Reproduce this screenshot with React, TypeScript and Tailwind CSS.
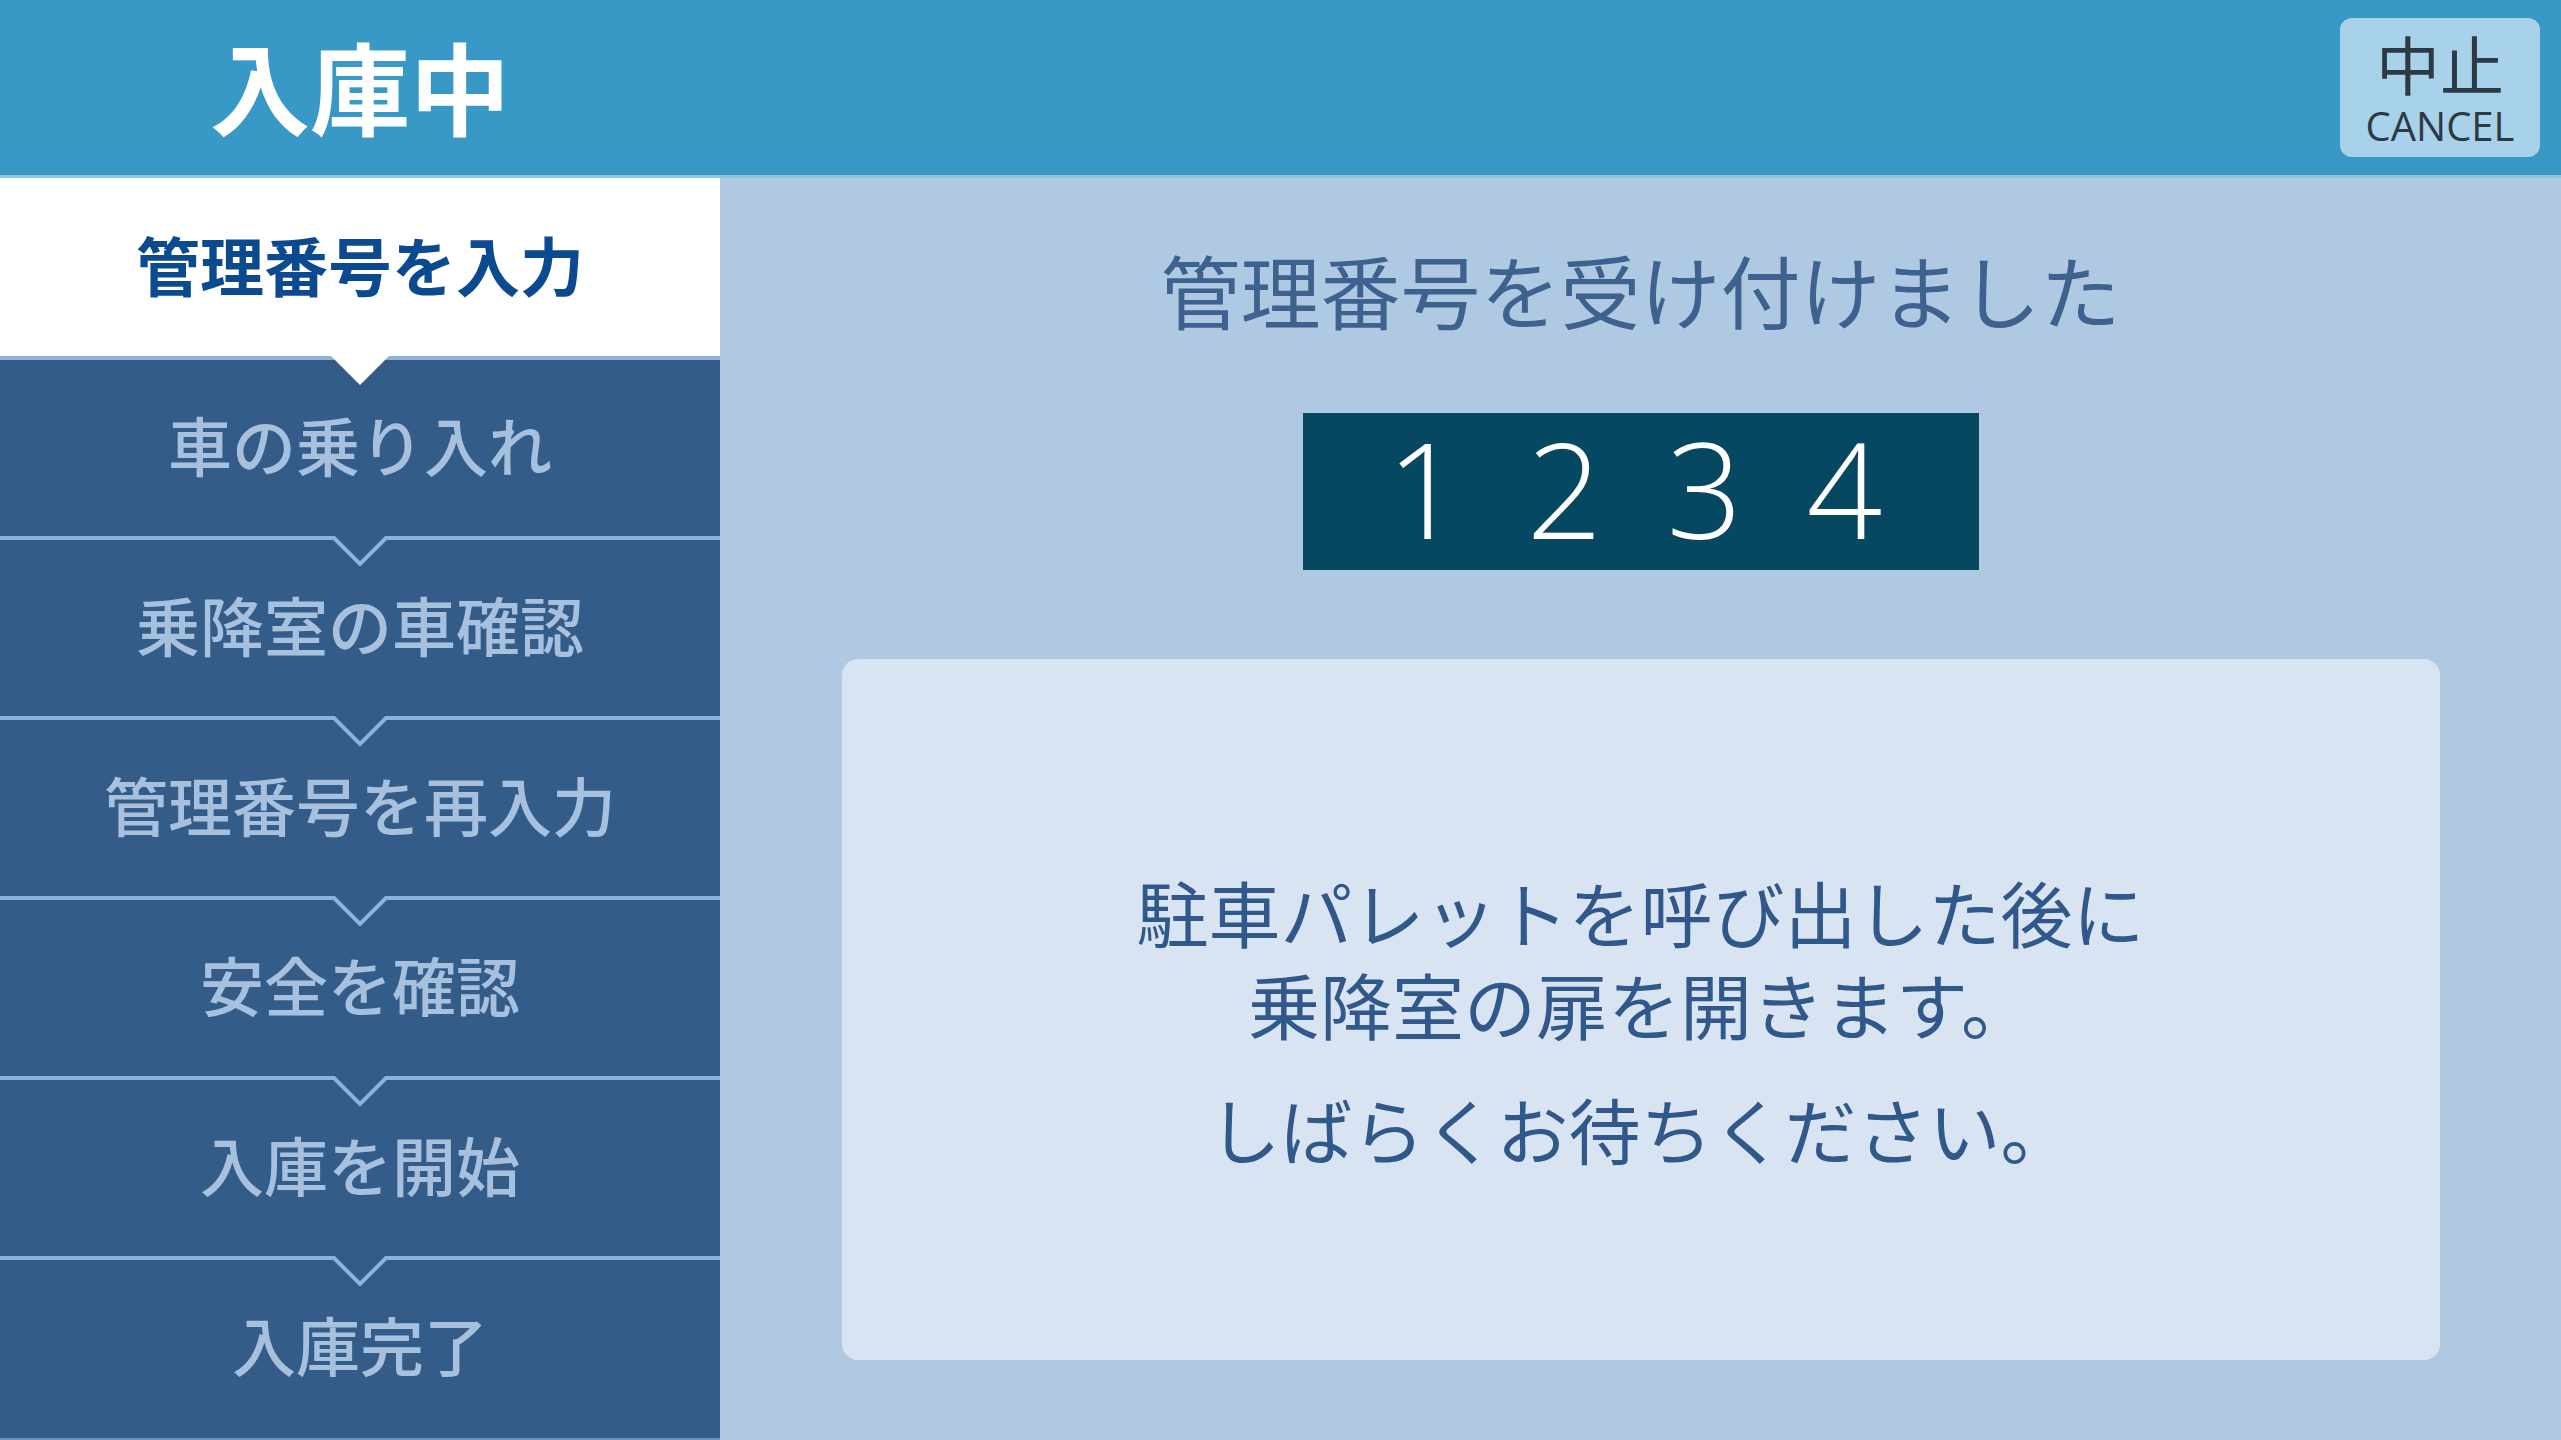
import React from "react";

const steps = [
  "管理番号を入力",
  "車の乗り入れ",
  "乗降室の車確認",
  "管理番号を再入力",
  "安全を確認",
  "入庫を開始",
  "入庫完了",
];

function Separator({ afterActive }: { afterActive: boolean }) {
  return (
    <svg
      className="absolute left-0 top-[-2px] pointer-events-none"
      width="720"
      height="34"
      viewBox="0 0 720 34"
    >
      {afterActive ? (
        <>
          <line x1="0" y1="2" x2="334" y2="2" stroke="#8eb2da" strokeWidth="4" />
          <line x1="386" y1="2" x2="720" y2="2" stroke="#8eb2da" strokeWidth="4" />
          <polygon points="331,0 389,0 360,29" fill="#ffffff" />
        </>
      ) : (
        <polyline
          points="0,2 334,2 360,28 386,2 720,2"
          fill="none"
          stroke="#8eb2da"
          strokeWidth="4"
          strokeLinejoin="miter"
        />
      )}
    </svg>
  );
}

export default function App() {
  const jp = "font-['Noto_Sans_CJK_JP','Noto_Sans',sans-serif]";
  return (
    <div className={`w-[2561px] h-[1440px] flex flex-col overflow-hidden ${jp}`}>
      {/* Header */}
      <header className="h-[178px] shrink-0 flex items-center bg-[#3899c6] border-b-[3px] border-[#8ec4e0]">
        <div className="w-[720px] flex justify-center pb-[6px]">
          <h1 className="text-[100px] leading-none font-bold text-white">入庫中</h1>
        </div>
        <div className="flex-1" />
        <button className="mr-[21px] w-[200px] h-[139px] rounded-[12px] bg-[#a7d2e9] flex flex-col items-center justify-center text-[#2c3a44]">
          <span className="text-[64px] leading-[64px]">中止</span>
          <span className="mt-[12px] text-[40px] leading-[40px] font-['Open_Sans',sans-serif]">
            CANCEL
          </span>
        </button>
      </header>

      {/* Body */}
      <div className="flex-1 flex min-h-0">
        {/* Sidebar */}
        <nav className="w-[720px] shrink-0 flex flex-col bg-[#7090b4]">
          {steps.map((s, i) => (
            <div
              key={s}
              className={
                i === 0
                  ? "relative h-[180px] shrink-0 flex items-center justify-center bg-white pb-[10px]"
                  : "relative h-[180px] shrink-0 flex items-center justify-center bg-[#335c89] pb-[10px]"
              }
            >
              {i > 0 && <Separator afterActive={i === 1} />}
              <span
                className={
                  i === 0
                    ? "text-[64px] leading-none font-bold text-[#0c4a8f]"
                    : "text-[64px] leading-none font-medium text-[#a7c0de]"
                }
              >
                {s}
              </span>
            </div>
          ))}
        </nav>

        {/* Main */}
        <main className="flex-1 flex flex-col items-center bg-[#b0c9e2] pt-[60px]">
          <h2 className="text-[80px] leading-[100px] text-[#3d6290]">管理番号を受け付けました</h2>
          <div className="mt-[75px] w-[676px] h-[157px] bg-[#064862] flex items-center justify-center pr-[12px] pb-[8px] font-['Open_Sans',sans-serif] font-light text-white text-[133px] leading-none">
            {["1", "2", "3", "4"].map((d) => (
              <span key={d} className="w-[140px] text-center">
                {d}
              </span>
            ))}
          </div>
          <div className="mt-[89px] w-[1598px] h-[701px] rounded-[16px] bg-[#d9e4f3] flex flex-col items-center justify-center pt-[20px] text-[72px] leading-[92px] text-[#30588a]">
            <p>駐車パレットを呼び出した後に</p>
            <p>乗降室の扉を開きます。</p>
            <p className="mt-[33px]">しばらくお待ちください。</p>
          </div>
        </main>
      </div>
    </div>
  );
}
